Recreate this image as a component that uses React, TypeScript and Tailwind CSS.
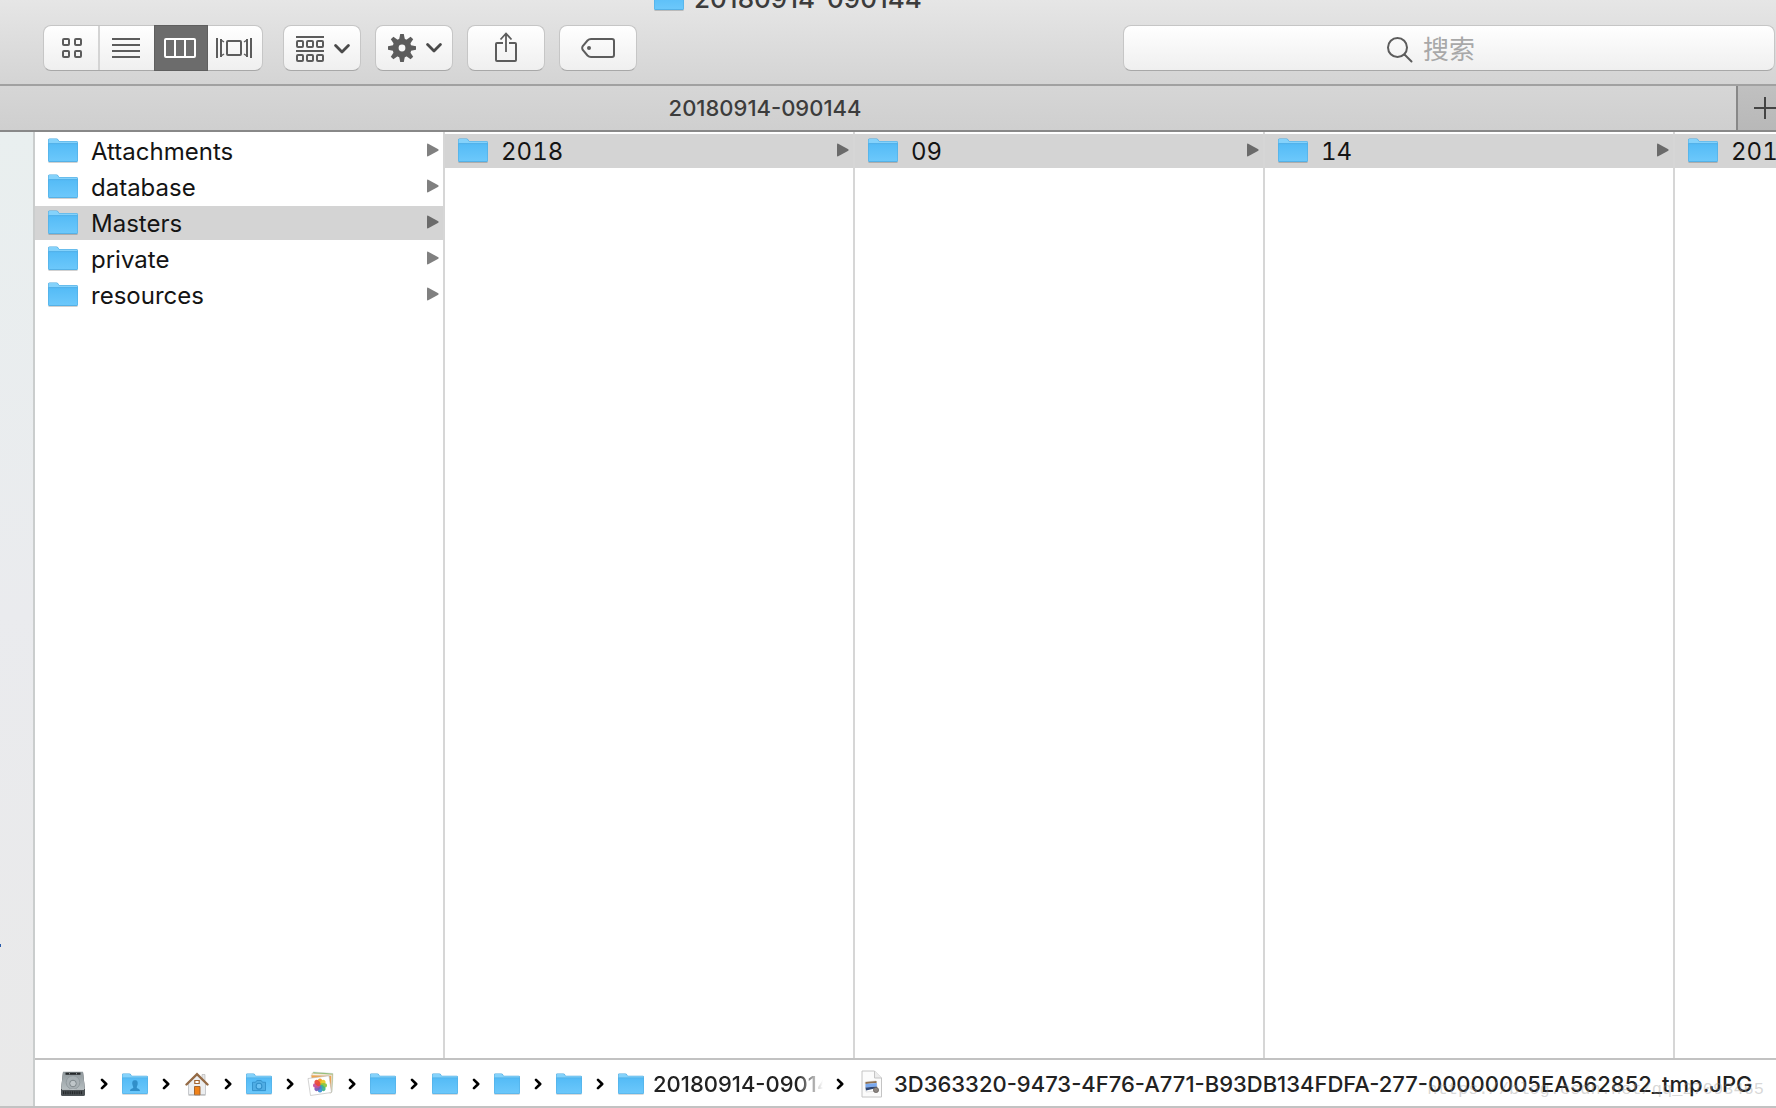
import React from "react";

function Folder({ className = "h-[25px] w-[30px]", children }: { className?: string; children?: React.ReactNode }) {
  return (
    <svg viewBox="0 0 30 25" preserveAspectRatio="none" className={className + " shrink-0"} aria-hidden="true">
      <defs>
        <linearGradient id="folderFace" x1="0" y1="0" x2="0" y2="1">
          <stop offset="0" stopColor="#54bbf6" />
          <stop offset="1" stopColor="#6cc8fb" />
        </linearGradient>
      </defs>
      <path d="M0.5 24.6h29" stroke="#000" strokeOpacity=".2" />
      <path d="M0 2Q0 .5 1.5 .5H8.5Q9.5 .5 10 1.2L11.2 3H28.5Q30 3 30 4.5V22.5Q30 24 28.5 24H1.5Q0 24 0 22.5Z" fill="#4da9df" />
      <path d="M.5 2.2Q.5 1 1.7 1H8.3Q9.2 1 9.6 1.6L11 3.6H28.4Q29.5 3.6 29.5 4.6V5.5H.5Z" fill="#84d2fb" />
      <path d="M.5 5.6H29.5V22.4Q29.5 23.3 28.5 23.3H1.5Q.5 23.3 .5 22.4Z" fill="url(#folderFace)" />
      <path d="M.5 5.6H29.5" stroke="#4faee6" strokeWidth=".7" />
      {children}
    </svg>
  );
}

function Triangle({ dark }: { dark?: boolean }) {
  return (
    <svg viewBox="0 0 12 14" className="h-[14px] w-3 shrink-0" aria-hidden="true">
      <path d="M0 1.4Q0 .2 1.2 .7L11.3 6.3Q12 7 11.3 7.7L1.2 13.3Q0 13.8 0 12.6Z" fill={dark ? "#6b6b6b" : "#808080"} />
    </svg>
  );
}

function Column({ items, selected }: { items: string[]; selected: string }) {
  return (
    <ul className="flex w-[410px] shrink-0 flex-col gap-[2px] border-r-2 border-[#d6d6d6] pt-[2px]">
      {items.map((name) => (
        <li key={name}>
          <button
            type="button"
            className={
              "flex h-[34px] w-full items-center pb-[2px] pl-[13px] pr-1 text-left " + (name === selected ? "bg-[#d4d4d4]" : "bg-white")
            }
          >
            <Folder />
            <span className="ml-[13px] flex-1 whitespace-nowrap pt-1 text-[24px] leading-7 tabular-nums">{name}</span>
            <Triangle dark={name === selected} />
          </button>
        </li>
      ))}
    </ul>
  );
}

const buttonFace =
  "flex h-[46px] items-center justify-center border border-[#c6c6c6] border-b-[#a8a8a8] bg-linear-to-b from-white to-[#efefef] rounded-lg";

function ChevronDown() {
  return (
    <svg viewBox="0 0 16 10" className="h-[10px] w-4" fill="none" stroke="#4a4a4a" strokeWidth="2.8" strokeLinecap="round" strokeLinejoin="round" aria-hidden="true">
      <path d="M1.6 1.6L8 8L14.4 1.6" />
    </svg>
  );
}

function SmallBoxes({ y }: { y: number }) {
  return (
    <>
      {[1, 11, 21].map((x) => (
        <rect key={x} x={x} y={y} width="6" height="6" rx="1" />
      ))}
    </>
  );
}

function Gear() {
  return (
    <svg viewBox="0 0 28 28" className="h-7 w-7" aria-hidden="true">
      <g fill="#5c5c5c">
        {[0, 45, 90, 135].map((a) => (
          <path key={a} d="M12.2 0H15.8L16.8 5V23L15.8 28H12.2L11.2 23V5Z" transform={`rotate(${a} 14 14)`} />
        ))}
        <circle cx="14" cy="14" r="9.6" />
      </g>
      <circle cx="14" cy="14" r="3.4" fill="#f8f8f8" />
    </svg>
  );
}

function Separator() {
  return (
    <svg viewBox="0 0 8 12" className="h-3 w-2 shrink-0" fill="none" stroke="#000" strokeWidth="2.6" strokeLinecap="round" strokeLinejoin="round" aria-hidden="true">
      <path d="M2 1.8L6.2 6L2 10.2" />
    </svg>
  );
}

const pathFolder = "h-[22px] w-[26px]";

function Drive() {
  return (
    <svg viewBox="0 0 26 26" className="h-[26px] w-[26px]" aria-hidden="true">
      <defs>
        <linearGradient id="driveTop" x1="0" y1="0" x2="0" y2="1">
          <stop offset="0" stopColor="#8e979b" />
          <stop offset="1" stopColor="#b4bcbf" />
        </linearGradient>
      </defs>
      <path d="M3 1H23L25 18V23.5Q25 25 23.500 25H2.500Q1 25 1 23.500V18Z" fill="#4c5255" />
      <path d="M3 .8H23L24.800 18H1.200Z" fill="url(#driveTop)" />
      <path d="M5.500 2.700H20.500" stroke="#26292b" strokeWidth="2.200" />
      <path d="M9 2.700H9.800M16 2.700H16.800" stroke="#c5cbcd" />
      <circle cx="13" cy="11.500" r="6.800" fill="#a8b0b4" stroke="#929b9f" />
      <circle cx="13" cy="12.500" r="3.300" fill="#bfc6c9" stroke="#7f888c" />
      <path d="M2 18.500H24" stroke="#ccd2d4" strokeWidth=".8" />
      <path d="M3 21.800H22" stroke="#24282a" strokeWidth="3" strokeDasharray="1 .8" />
    </svg>
  );
}

function House() {
  return (
    <svg viewBox="0 0 24 24" className="h-6 w-6" aria-hidden="true">
      <path d="M17 2.500H20V9H17Z" fill="#e6e6e6" stroke="#b0b0b0" strokeWidth=".6" />
      <path d="M3.500 11L12 3L20.500 11V22.500H3.500Z" fill="#eceef0" stroke="#b5b8bb" strokeWidth=".7" />
      <path d="M1.500 12.500L12 2.200L22.500 12.500" fill="none" stroke="#946a45" strokeWidth="2.400" strokeLinecap="round" />
      <path d="M9.800 8.500H14.200V11.500H9.800Z" fill="#fff" stroke="#a26430" strokeWidth="1.200" />
      <path d="M9.500 14.500H15V23H9.500Z" fill="#f08218" stroke="#9c5a22" strokeWidth=".9" />
      <path d="M3.500 23.200H20.500" stroke="#aaa" strokeWidth=".8" />
    </svg>
  );
}

const petals = ["#f59b22", "#e9c928", "#8cc63f", "#3fb58b", "#3f8fd6", "#7f5bb5", "#c6529c", "#ea4b3c"];

function Photos() {
  return (
    <svg viewBox="0 0 28 26" className="h-[26px] w-7" aria-hidden="true">
      <g strokeWidth=".6">
        <path d="M6 1L26 2.500L25 21L8 18Z" fill="#6cbf5b" stroke="#ccc" />
        <path d="M5 2.300L25.500 3.500L24 22L7 18Z" fill="#fbf8ee" stroke="#c9b98a" />
        <path d="M4 4L24.500 4.500V20L6 18Z" fill="#f0a44c" stroke="#ddd" />
        <path d="M1 7.500L22 4.800L24.500 21.500L3.500 24.500Z" fill="#fff" stroke="#b5b5b5" />
      </g>
      {petals.map((c, i) => (
        <ellipse key={c} cx="13" cy="11" rx="2.400" ry="3.500" fill={c} fillOpacity=".95" transform={`rotate(${i * 45} 13 14.500)`} />
      ))}
    </svg>
  );
}

function Picture() {
  return (
    <svg viewBox="0 0 22 28" className="h-7 w-[22px] shrink-0" aria-hidden="true">
      <path d="M1 1H13.500L20.500 8V27H1Z" fill="#fbfbfb" stroke="#c4c4c4" />
      <path d="M13.500 1V8H20.500" fill="#ececec" stroke="#c4c4c4" />
      <path d="M4 12L15 10.800L17 21L5 22Z" fill="#fff" stroke="#ccc" strokeWidth=".5" />
      <path d="M4.500 12L15.500 11V13L4.500 14Z" fill="#8e6f4f" />
      <path d="M4.500 14L15.800 13V16.500L4.500 17.500Z" fill="#79a8ee" />
      <path d="M4.500 17.500L15.800 16.500L16 18L5 20.500Z" fill="#2e4674" />
      <circle cx="15" cy="20" r="2.600" fill="#8b8581" stroke="#615c58" strokeWidth=".7" />
    </svg>
  );
}

const crumbs: { label: string; icon: React.ReactNode }[] = [
  { label: "Disk", icon: <Drive /> },
  {
    label: "Users",
    icon: (
      <Folder className={pathFolder}>
        <path d="M15 8.200C18 8.200 18.500 10.500 18 13C17.600 15 17 15.500 17 16.500C17.500 18 20.500 17.500 20.800 20.500H9.200C9.500 17.500 12.500 18 13 16.500C13 15.500 12.400 15 12 13C11.500 10.500 12 8.200 15 8.200Z" fill="#318fc9" />
      </Folder>
    ),
  },
  { label: "Home", icon: <House /> },
  {
    label: "Pictures",
    icon: (
      <Folder className={pathFolder}>
        <path d="M7.500 10.500H11L12.500 8.500H17.500L19 10.500H22.500V20H7.500Z" fill="#50ade4" stroke="#318fc9" />
        <circle cx="15" cy="15" r="3.300" fill="#6bc2f5" stroke="#318fc9" strokeWidth="1.200" />
      </Folder>
    ),
  },
  { label: "Photos Library", icon: <Photos /> },
  { label: "Masters", icon: <Folder className={pathFolder} /> },
  { label: "2018", icon: <Folder className={pathFolder} /> },
  { label: "09", icon: <Folder className={pathFolder} /> },
  { label: "14", icon: <Folder className={pathFolder} /> },
];

export default function App() {
  return (
    <div className="flex h-screen flex-col overflow-hidden bg-white font-['Inter','Noto_Sans_CJK_SC',sans-serif] text-[#141414]">
      <header className="shrink-0 overflow-hidden border-b-2 border-[#a1a1a1] bg-linear-to-b from-[#e6e6e6] to-[#d4d4d4]">
        <div className="flex h-[11px] items-end justify-center gap-[10px] pr-[200px]">
          <Folder />
          <h1 className="-mb-1 text-[26px] font-medium leading-8 text-[#3c3c3c]">20180914-090144</h1>
        </div>
        <div className="flex h-[73px] items-start pl-[43px] pr-px pt-[14px]">
          <div className={buttonFace + " w-[220px] shrink-0"}>
            <button type="button" aria-label="Icon view" className="flex h-full flex-1 items-center justify-center border-r-2 border-[#d4d4d4] pl-[2px]">
              <svg viewBox="0 0 20 20" className="h-5 w-5" fill="none" stroke="#5c5c5c" strokeWidth="2" aria-hidden="true">
                <rect x="1" y="1" width="6" height="6" rx="1" />
                <rect x="13" y="1" width="6" height="6" rx="1" />
                <rect x="1" y="13" width="6" height="6" rx="1" />
                <rect x="13" y="13" width="6" height="6" rx="1" />
              </svg>
            </button>
            <button type="button" aria-label="List view" className="flex h-full w-[54px] items-center justify-center pr-[2px]">
              <svg viewBox="0 0 28 20" className="h-5 w-7" stroke="#5c5c5c" strokeWidth="2" aria-hidden="true">
                <path d="M0 1H28M0 7H28M0 13H28M0 19H28" />
              </svg>
            </button>
            <button type="button" aria-label="Column view" aria-pressed="true" className="-my-px flex h-[46px] w-[54px] items-center justify-center border border-[#5f5f5f] bg-[#6c6c6c] pr-[2px]">
              <svg viewBox="0 0 32 20" className="h-5 w-8" fill="none" stroke="#fff" strokeWidth="2" aria-hidden="true">
                <rect x="1" y="1" width="30" height="18" rx="1" />
                <path d="M11 1V19M21 1V19" />
              </svg>
            </button>
            <button type="button" aria-label="Cover flow view" className="flex h-full w-[54px] items-center justify-center pr-[2px]">
              <svg viewBox="0 0 36 20" className="h-5 w-9" fill="none" stroke="#5c5c5c" strokeWidth="2" aria-hidden="true">
                <rect x="11" y="3" width="14" height="14" rx="1" />
                <path d="M1 0V20M35 0V20M5 1V19M31 1V19" />
                <path d="M5 2L8 4M5 18L8 16M31 2L28 4M31 18L28 16" strokeWidth="1.500" />
              </svg>
            </button>
          </div>
          <button type="button" aria-label="Arrange" className={buttonFace + " ml-5 w-[78px] shrink-0 gap-[10px] pl-px pt-[2px]"}>
            <svg viewBox="0 0 28 26" className="h-[26px] w-7" fill="none" stroke="#5c5c5c" strokeWidth="2" aria-hidden="true">
              <path d="M0 1H28M0 15H28" />
              <SmallBoxes y={5} />
              <SmallBoxes y={19} />
            </svg>
            <ChevronDown />
          </button>
          <button type="button" aria-label="Actions" className={buttonFace + " ml-[14px] w-[78px] shrink-0 gap-[10px] pl-px"}>
            <Gear />
            <ChevronDown />
          </button>
          <button type="button" aria-label="Share" className={buttonFace + " ml-[14px] w-[78px] shrink-0"}>
            <svg viewBox="0 0 22 30" className="-mt-[2px] h-[30px] w-[22px]" fill="none" stroke="#5c5c5c" strokeWidth="2" aria-hidden="true">
              <path d="M8 11H2Q1 11 1 12V28Q1 29 2 29H20Q21 29 21 28V12Q21 11 20 11H14" />
              <path d="M11 20V2M5.500 7.500L11 1.500L16.500 7.500" strokeWidth="1.800" />
            </svg>
          </button>
          <button type="button" aria-label="Tags" className={buttonFace + " ml-[14px] w-[78px] shrink-0"}>
            <svg viewBox="0 0 34 20" className="h-5 w-[34px]" fill="none" stroke="#5c5c5c" strokeWidth="2" aria-hidden="true">
              <path d="M10 1H31Q33 1 33 3V17Q33 19 31 19H10Q8 19 6.500 17.500L1.800 12Q.6 10 1.800 8L6.500 2.500Q8 1 10 1Z" />
              <circle cx="8" cy="10" r="2" fill="#5c5c5c" stroke="none" />
            </svg>
          </button>
          <label className={buttonFace + " ml-auto w-[652px] gap-[10px] pt-[3px]"}>
            <svg viewBox="0 0 26 26" className="h-[26px] w-[26px]" fill="none" stroke="#5c5c5c" strokeWidth="2" strokeLinecap="round" aria-hidden="true">
              <circle cx="10.500" cy="10.500" r="9.500" />
              <path d="M17.500 17.500L24.500 24.500" />
            </svg>
            <input type="search" aria-label="搜索" placeholder="搜索" className="w-[88px] bg-transparent text-[26px] leading-8 outline-none placeholder:text-[#a8a8a8]" />
          </label>
        </div>
      </header>

      <nav className="flex h-[46px] shrink-0 border-b-2 border-[#888]" aria-label="Tabs">
        <button type="button" className="flex flex-1 items-center justify-center bg-linear-to-b from-[#d6d6d6] to-[#cfcfcf] pr-[206px] text-[22px] font-medium leading-7 text-[#3c3c3c]">
          20180914-090144
        </button>
        <button type="button" aria-label="New tab" className="flex w-10 items-center overflow-hidden border-l-2 border-[#888] bg-linear-to-b from-[#c0c0c0] to-[#b8b8b8] pl-4">
          <svg viewBox="0 0 22 22" className="h-[22px] w-[22px] shrink-0" stroke="#444" strokeWidth="2" aria-hidden="true">
            <path d="M11 0V22M0 11H22" />
          </svg>
        </button>
      </nav>

      <div className="flex min-h-0 flex-1 border-b-2 border-[#c2c2c2]">
        <aside className="flex w-[35px] shrink-0 flex-col justify-end border-r-2 border-[#cacdcd] bg-linear-to-b from-[#e9efef] via-[#eaebee] to-[#e9e9e9] pb-[159px]">
          <span className="h-[3px] w-px bg-[#2a5cab]" />
        </aside>
        <main className="flex min-w-0 flex-1 flex-col">
          <div className="flex min-h-0 flex-1 overflow-hidden">
            <Column items={["Attachments", "database", "Masters", "private", "resources"]} selected="Masters" />
            <Column items={["2018"]} selected="2018" />
            <Column items={["09"]} selected="09" />
            <Column items={["14"]} selected="14" />
            <Column items={["20180914-090144"]} selected="20180914-090144" />
          </div>
          <footer className="relative flex h-12 shrink-0 items-center overflow-hidden border-t-2 border-[#c2c2c2] pl-[22px] pt-[2px] text-[22px] font-medium leading-7 text-[#222]">
            {crumbs.map((crumb) => (
              <div key={crumb.label} className="flex w-[62px] shrink-0 items-center">
                <button type="button" aria-label={crumb.label} className="flex w-8 justify-center">
                  {crumb.icon}
                </button>
                <span className="ml-[11px]">
                  <Separator />
                </span>
              </div>
            ))}
            <button type="button" className="ml-[3px] flex shrink-0 items-center gap-[9px]">
              <Folder className={pathFolder} />
              <span className="w-[170px] overflow-hidden whitespace-nowrap mask-r-from-85% text-left">20180914-090144</span>
            </button>
            <span className="ml-[13px] mr-[17px]">
              <Separator />
            </span>
            <button type="button" className="flex shrink-0 items-center gap-[11px]">
              <Picture />
              <span className="whitespace-nowrap">3D363320-9473-4F76-A771-B93DB134FDFA-277-00000005EA562852_tmp.JPG</span>
            </button>
            <span className="pointer-events-none absolute bottom-1 right-3 font-['Liberation_Mono',monospace] text-[17px] font-normal leading-6 text-[#999]/40">
              https://blog.csdn.net/qq_27093465
            </span>
          </footer>
        </main>
      </div>
    </div>
  );
}
